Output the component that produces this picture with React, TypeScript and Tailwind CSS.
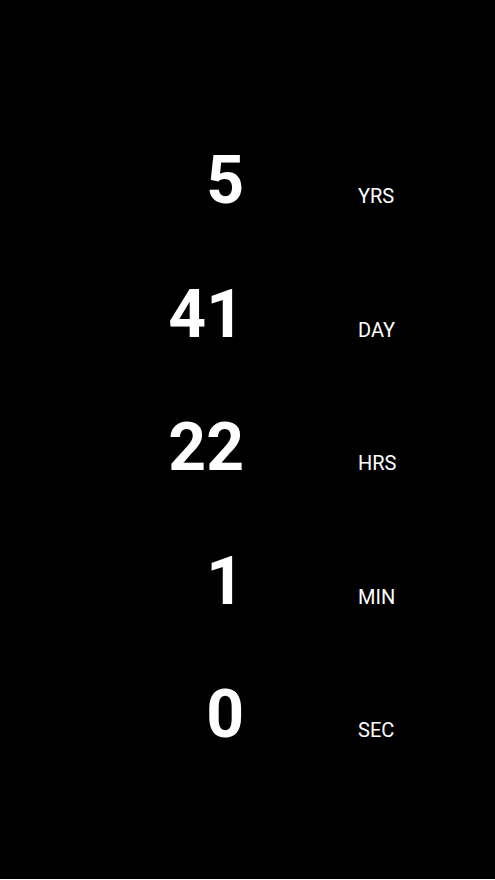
import React from 'react';

const rows = [
  { value: 5, unit: 'YRS' },
  { value: 41, unit: 'DAY' },
  { value: 22, unit: 'HRS' },
  { value: 1, unit: 'MIN' },
  { value: 0, unit: 'SEC' },
];

export default function App() {
  return (
    <div
      className="w-full h-[879px] bg-black text-white pt-[114px]"
      style={{ fontFamily: 'Roboto, "Noto Sans", sans-serif' }}
    >
      <div className="flex flex-col">
        {rows.map((r) => (
          <div key={r.unit} className="flex items-baseline">
            <div className="w-[244px] text-right text-[66px] font-bold leading-[133.5px]">
              {r.value}
            </div>
            <div className="ml-[114px] text-[20px] leading-none">{r.unit}</div>
          </div>
        ))}
      </div>
    </div>
  );
}
